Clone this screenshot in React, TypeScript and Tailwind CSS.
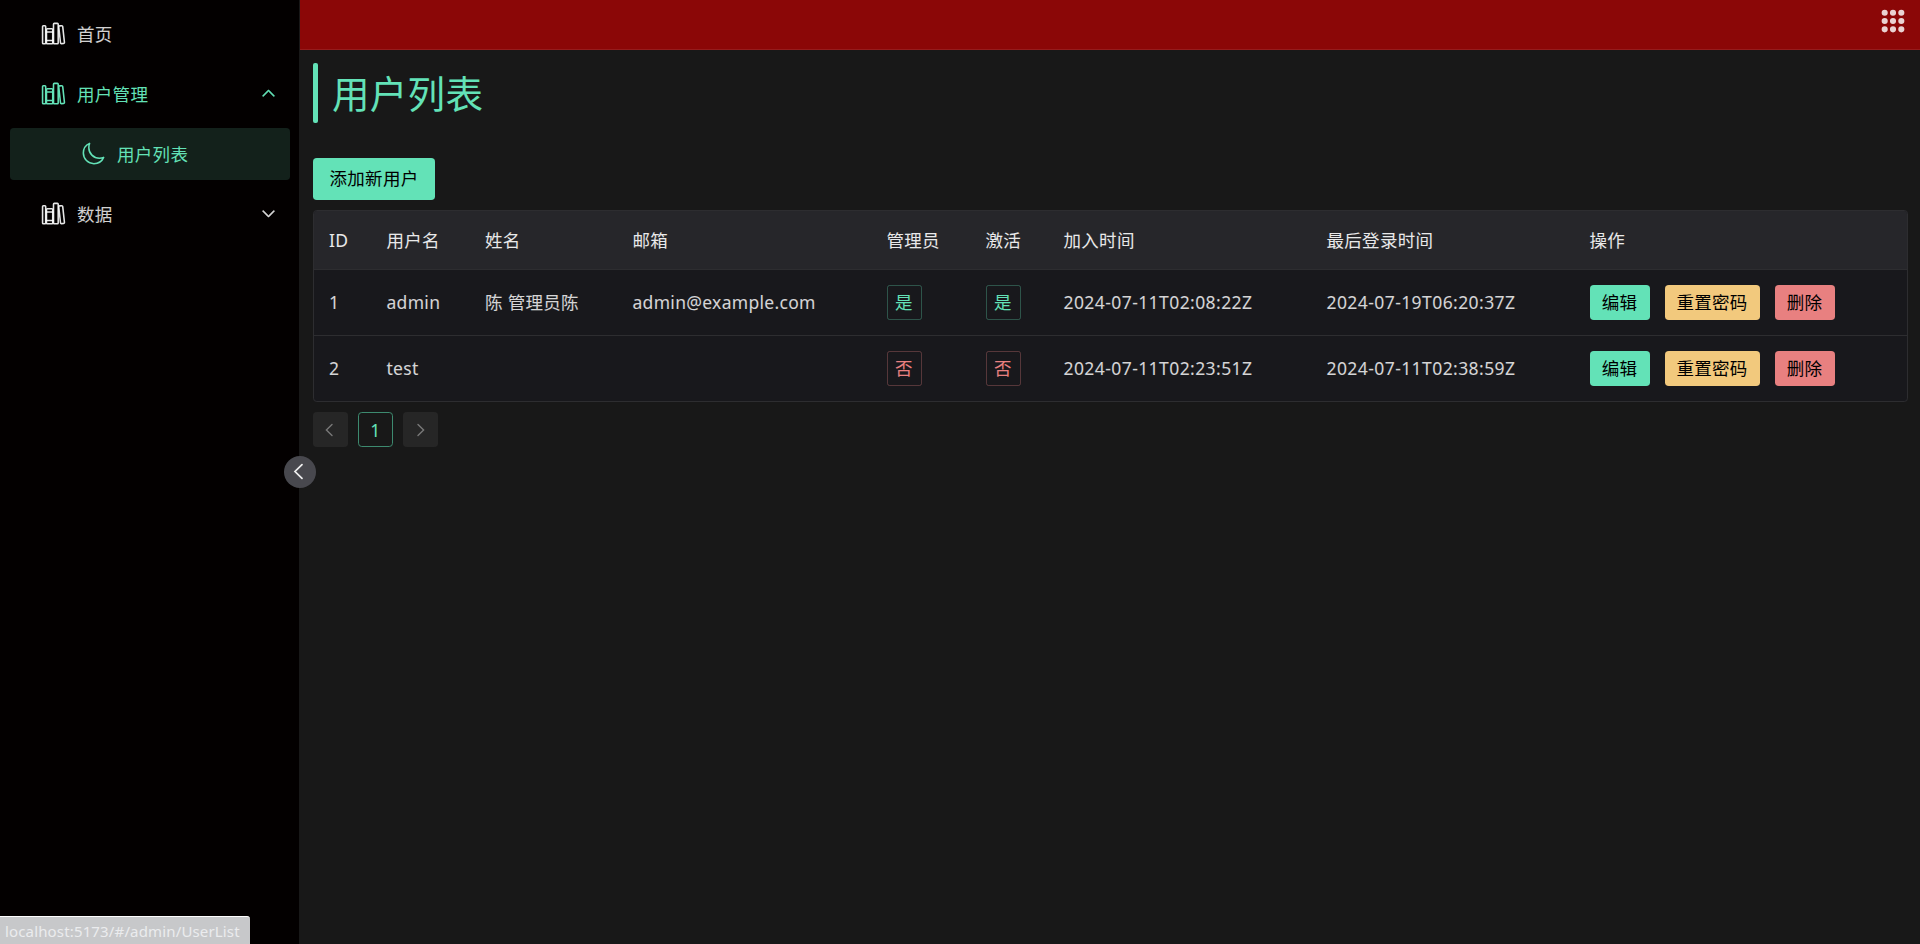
import clsx from 'clsx';
import { IoApps, IoLibraryOutline, IoMoonOutline } from 'react-icons/io5';

interface User {
  id: number;
  username: string;
  name: string;
  email: string;
  isAdmin: boolean;
  isActive: boolean;
  dateJoined: string;
  lastLogin: string;
}

const users: User[] = [
  {
    id: 1,
    username: 'admin',
    name: '陈 管理员陈',
    email: 'admin@example.com',
    isAdmin: true,
    isActive: true,
    dateJoined: '2024-07-11T02:08:22Z',
    lastLogin: '2024-07-19T06:20:37Z',
  },
  {
    id: 2,
    username: 'test',
    name: '',
    email: '',
    isAdmin: false,
    isActive: false,
    dateJoined: '2024-07-11T02:23:51Z',
    lastLogin: '2024-07-11T02:38:59Z',
  },
];

const columns = ['ID', '用户名', '姓名', '邮箱', '管理员', '激活', '加入时间', '最后登录时间', '操作'];

const rowGrid = 'grid grid-cols-[57.5px_98.5px_147.5px_254px_99px_78px_263px_263px_1fr] items-center *:px-[15px]';

const ChevronLeft = ({ className }: { className?: string }) => (
  <svg viewBox="0 0 20 20" fill="none" stroke="currentColor" strokeWidth="1.4" strokeLinecap="round" className={className}>
    <path d="M12 4.5 6.4 10l5.6 5.5" />
  </svg>
);

const ChevronDown = ({ className }: { className?: string }) => (
  <svg viewBox="0 0 16 16" fill="currentColor" className={className}>
    <path d="M3.146 5.646a.5.5 0 0 1 .708 0L8 9.793l4.146-4.147a.5.5 0 0 1 .708.708l-4.5 4.5a.5.5 0 0 1-.708 0l-4.5-4.5a.5.5 0 0 1 0-.708z" stroke="currentColor" strokeWidth=".5" />
  </svg>
);

function MenuItem({ label, active, arrow }: { label: string; active?: boolean; arrow?: 'up' | 'down' }) {
  return (
    <div className={clsx('mt-[7.5px] flex h-[52.5px] items-center pr-[21px] pl-[41px]', active ? 'text-[#63e2b7]' : 'text-white/82')}>
      <IoLibraryOutline className={clsx('size-[25px]', !active && 'text-white/90')} />
      <span className="ml-[11px] flex-1">{label}</span>
      {arrow && <ChevronDown className={clsx('size-[19px]', arrow === 'up' && 'rotate-180')} />}
    </div>
  );
}

function Tag({ value }: { value: boolean }) {
  return (
    <span
      className={clsx(
        'flex size-[35px] items-center justify-center rounded-[2.5px] border pb-0.5',
        value ? 'border-[#63e2b7]/30 text-[#63e2b7]' : 'border-[#e88080]/30 text-[#e88080]',
      )}
    >
      {value ? '是' : '否'}
    </span>
  );
}

function ActionButton({ label, className }: { label: string; className: string }) {
  return (
    <button className={clsx('flex h-[35px] items-center justify-center rounded-[3.75px] pb-0.5 text-black', className)}>
      {label}
    </button>
  );
}

export default function App() {
  return (
    <div className="relative flex h-[944px] overflow-hidden bg-[#181818] font-['Noto_Sans','Noto_Sans_CJK_SC',sans-serif] text-[17.5px] leading-7 tracking-[0.3px] text-white/82">
      {/* Sidebar */}
      <aside className="w-[300px] shrink-0 border-r border-[#181818] bg-[#030000]">
        <MenuItem label="首页" />
        <MenuItem label="用户管理" active arrow="up" />
        <div className="mr-[9px] ml-2.5 mt-[7.5px] flex h-[52.5px] items-center rounded-[3.75px] bg-[#13211b] pl-[71px] text-[#63e2b7]">
          <IoMoonOutline className="size-[25px]" />
          <span className="ml-[11px]">用户列表</span>
        </div>
        <MenuItem label="数据" arrow="down" />
      </aside>

      <div className="min-w-0 flex-1">
        {/* Header */}
        <header className="flex h-[50px] justify-end border-b border-[#961c1c] bg-[#8b0707] pt-[7px] pr-[13px]">
          <IoApps className="size-7 text-white/82" />
        </header>

        <main className="pt-[13px] pr-3 pl-[13px]">
          <div className="flex h-[60px] items-center">
            <div className="h-[60px] w-[5px] rounded-[2px] bg-[#63e2b7]" />
            <h1 className="ml-3.5 pt-0.5 text-[37.5px] leading-[60px] tracking-[0.3px] text-[#63e2b7]">用户列表</h1>
          </div>

          <button className="mt-[35px] flex h-[42px] w-[122px] items-center justify-center rounded-[3.75px] bg-[#63e2b7] pb-0.5 text-black">
            添加新用户
          </button>

          <div className="mt-2.5 overflow-hidden rounded-[3.75px] border border-[#2d2d30] bg-[#18181c]">
            <div className={clsx(rowGrid, 'h-[58px] bg-[#26262a] pb-px text-white/90')}>
              {columns.map((c) => (
                <div key={c}>{c}</div>
              ))}
            </div>
            {users.map((u) => (
              <div key={u.id} className={clsx(rowGrid, 'h-[66px] border-t border-[#2d2d30]')}>
                <div className="pb-0.5">{u.id}</div>
                <div className="pb-0.5">{u.username}</div>
                <div className="pb-0.5">{u.name}</div>
                <div className="pb-0.5">{u.email}</div>
                <div><Tag value={u.isAdmin} /></div>
                <div><Tag value={u.isActive} /></div>
                <div className="pb-0.5 tracking-[0.42px]">{u.dateJoined}</div>
                <div className="pb-0.5 tracking-[0.42px]">{u.lastLogin}</div>
                <div className="flex gap-[15px]">
                  <ActionButton label="编辑" className="w-[60px] bg-[#63e2b7]" />
                  <ActionButton label="重置密码" className="w-[95px] bg-[#f2c97d]" />
                  <ActionButton label="删除" className="w-[60px] bg-[#e88080]" />
                </div>
              </div>
            ))}
          </div>

          {/* Pagination */}
          <div className="mt-2.5 flex gap-2.5 *:flex *:size-[35px] *:items-center *:justify-center *:rounded-[3.75px]">
            <div className="bg-[#262626] pr-0.5 text-white/38">
              <ChevronLeft className="size-5" />
            </div>
            <div className="border border-[#3d8a6f] text-[#63e2b7]">1</div>
            <div className="bg-[#262626] pr-0.5 text-white/38">
              <ChevronLeft className="size-5 rotate-180" />
            </div>
          </div>
        </main>
      </div>

      {/* Sidebar toggle */}
      <button className="absolute top-[455.5px] left-[283.5px] flex size-[32.5px] items-center justify-center rounded-full bg-[#48484e] text-white/90">
        <ChevronLeft className="size-[25px]" />
      </button>

      {/* Link status bubble */}
      <div className="absolute bottom-0 left-0 h-7 w-[250px] rounded-tr-[3px] border-t border-white bg-[#c7c8ca] pl-[5px] text-[15px] leading-[29px] tracking-[0.15px] whitespace-nowrap text-[#ebecee]">
        localhost:5173/#/admin/UserList
      </div>
    </div>
  );
}
